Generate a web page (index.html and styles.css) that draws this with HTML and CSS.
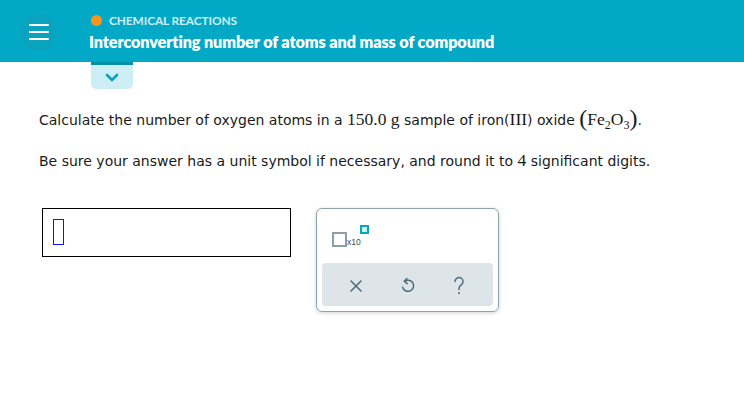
FILE: index.html
```html
<!DOCTYPE html>
<html>
<head>
<meta charset="utf-8">
<link rel="stylesheet" href="styles.css">
</head>
<body>
<header class="topbar">
  <div class="menu-btn">
    <span></span><span></span><span></span>
  </div>
  <div class="titles">
    <div class="topic"><span class="dot"></span>CHEMICAL REACTIONS</div>
    <div class="title">Interconverting number of atoms and mass of compound</div>
  </div>
</header>
<div class="tab-row">
  <div class="tab">
    <svg width="14" height="9" viewBox="0 0 14 9"><path d="M2 2 L7 7 L12 2" fill="none" stroke="#0aa3c0" stroke-width="2.6" stroke-linecap="round" stroke-linejoin="round"/></svg>
  </div>
</div>
<main class="content">
  <p class="q">Calculate the number of oxygen atoms in a <span class="m">150.0 g</span> sample of iron(<span class="m">III</span>) oxide <span class="m formula"><span class="paren">(</span>Fe<sub>2</sub>O<sub>3</sub><span class="paren">)</span></span>.</p>
  <p class="q q2">Be sure your answer has a unit symbol if necessary, and round it to <span class="m">4</span> significant digits.</p>
  <div class="answer-row">
    <div class="answer-box"><span class="cursor"></span></div>
    <div class="toolbox">
      <div class="tools-top">
        <div class="sci">
          <span class="sq"></span><span class="x10">x10</span><span class="exp"></span>
        </div>
      </div>
      <div class="tools-bottom">
        <svg width="14" height="14" viewBox="0 0 14 14"><path d="M2 2 L12 12 M12 2 L2 12" stroke="#4e6d7a" stroke-width="1.6" stroke-linecap="round"/></svg>
        <svg width="16" height="20" viewBox="0 0 16 20"><path d="M7 2.5 L4.2 5.2 L7.2 7.6" fill="none" stroke="#4e6d7a" stroke-width="1.5" stroke-linecap="round" stroke-linejoin="round"/><path d="M4.6 5.3 A5.6 5.6 0 1 1 2.6 11.2" fill="none" stroke="#4e6d7a" stroke-width="1.5" stroke-linecap="round"/></svg>
        <svg width="14" height="20" viewBox="0 0 14 20"><path d="M3 5.5 A4 4 0 1 1 9.2 8.8 C7.6 9.9 7 10.8 7 12.6 V13.6" fill="none" stroke="#4e6d7a" stroke-width="1.5" stroke-linecap="round"/><circle cx="7" cy="17.3" r="1" fill="#4e6d7a"/></svg>
      </div>
    </div>
  </div>
</main>
</body>
</html>
```

FILE: styles.css
```css
* { box-sizing: border-box; }
html, body { margin: 0; padding: 0; background: #fff; }
body { width: 744px; height: 416px; overflow: hidden; }

.topbar {
  height: 62px;
  background: #02a9c7;
  display: flex;
  align-items: center;
}
.menu-btn {
  width: 37px;
  height: 37px;
  border-radius: 50%;
  background: #0aa2bd;
  margin-left: 20px;
  margin-top: 2px;
  display: flex;
  flex-direction: column;
  align-items: center;
  justify-content: center;
  gap: 5px;
}
.menu-btn span {
  display: block;
  width: 20px;
  height: 2px;
  background: #fff;
  border-radius: 1px;
}
.titles {
  margin-left: 32px;
  display: flex;
  flex-direction: column;
  gap: 5px;
  margin-top: 3px;
}
.topic {
  display: flex;
  align-items: center;
  font-family: Lato, "Liberation Sans", sans-serif;
  font-weight: 700;
  font-size: 11.9px;
  color: #cdeef4;
  letter-spacing: -0.1px;
  line-height: 13px;
  margin-left: 2px;
}
.dot {
  width: 11px;
  height: 11px;
  border-radius: 50%;
  background: #f7941d;
  margin-right: 7px;
}
.title {
  font-family: Lato, "Liberation Sans", sans-serif;
  font-weight: 800;
  font-size: 16.2px;
  color: #fff;
  line-height: 19px;
  letter-spacing: -0.1px;
}

.tab-row { display: flex; padding-left: 91px; }
.tab {
  width: 42px;
  height: 27px;
  background: #cdeef4;
  border-top: 3px solid #0590a8;
  border-radius: 0 0 5px 5px;
  display: flex;
  align-items: center;
  justify-content: center;
}

.content { padding: 0 0 0 39px; }
.q {
  margin: 18px 0 0 0;
  font-family: "DejaVu Sans", Verdana, sans-serif;
  font-size: 14px;
  color: #1a1a1a;
  line-height: 24px;
}
.q2 { margin-top: 16px; }
.m {
  font-family: "Liberation Serif", "Times New Roman", serif;
  font-size: 17.5px;
}
.formula sub { font-size: 12px; vertical-align: -4px; line-height: 0; }
.paren { font-size: 24px; vertical-align: -1px; line-height: 0; }

.answer-row {
  display: flex;
  align-items: flex-start;
  margin-top: 35px;
  margin-left: 3px;
}
.answer-box {
  width: 249px;
  height: 49px;
  border: 1px solid #000;
  padding: 10px 0 0 10px;
}
.cursor {
  display: block;
  width: 11px;
  height: 26px;
  border: 1px solid #1010ff;
}
.toolbox {
  margin-left: 25px;
  width: 183px;
  height: 104px;
  border: 1px solid #8aa4ae;
  border-radius: 6px;
  box-shadow: 0 1px 4px rgba(0,0,0,0.18);
  padding: 0 5px 5px 5px;
  display: flex;
  flex-direction: column;
}
.tools-top { height: 54px; padding: 16px 0 0 10px; }
.sci { display: flex; align-items: flex-end; height: 22px; }
.sq {
  width: 15px;
  height: 15px;
  border: 2px solid #8aa0a8;
  display: block;
}
.x10 {
  font-family: "Liberation Sans", Arial, sans-serif;
  font-size: 8.5px;
  color: #3b4d55;
  line-height: 9px;
}
.exp {
  width: 9px;
  height: 9px;
  border: 2px solid #0aa3c0;
  background: #cdeef4;
  display: block;
  align-self: flex-start;
  margin-left: -1px;
}
.tools-bottom {
  flex: 1;
  background: #dde5e8;
  border-radius: 4px;
  display: flex;
  align-items: center;
  justify-content: space-between;
  padding: 2px 27px 0 27px;
}
```
